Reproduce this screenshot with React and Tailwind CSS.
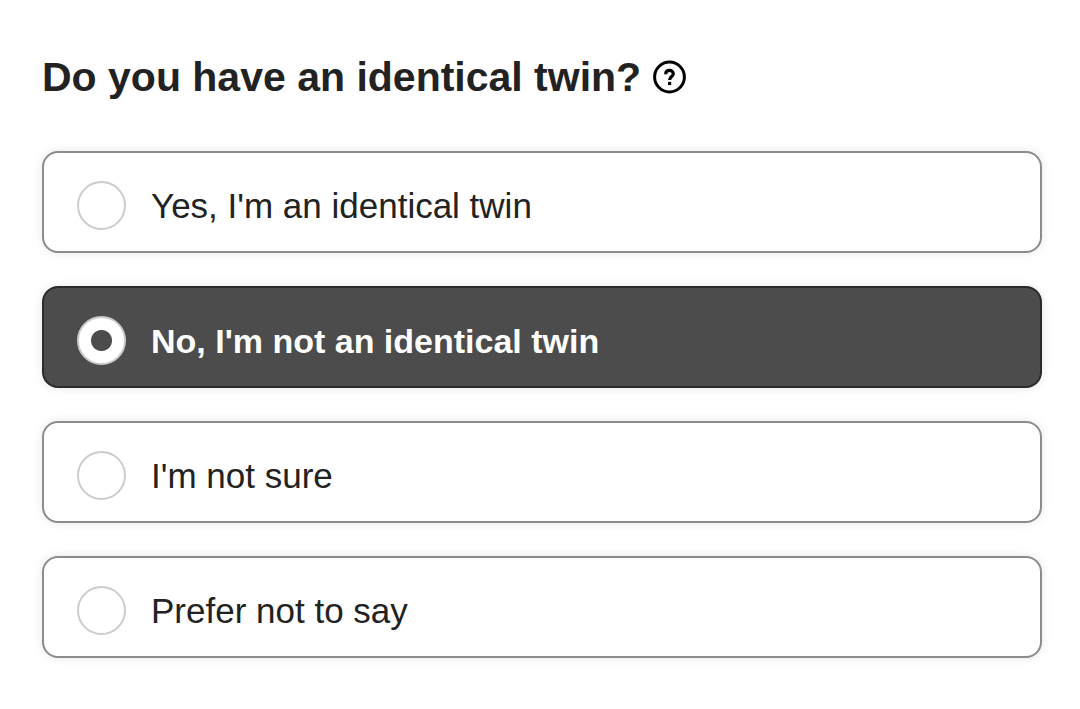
import { useState } from 'react';

const OPTIONS = [
  { value: 'yes', label: "Yes, I'm an identical twin" },
  { value: 'no', label: "No, I'm not an identical twin" },
  { value: 'unsure', label: "I'm not sure" },
  { value: 'skip', label: 'Prefer not to say' },
];

const HelpIcon = () => (
  <svg viewBox="0 0 34 34" className="w-[34px] h-[34px]" fill="none" stroke="currentColor" aria-hidden="true">
    <circle cx="16.5" cy="17" r="14.9" strokeWidth="3" />
    <path d="M12.7 14.2c0-2.4 1.6-3.9 3.8-3.9s3.8 1.5 3.8 3.5c0 2.7-3.7 2.9-3.7 6.1" strokeWidth="3.2" />
    <path d="M15 21.9h3.2v3.2h-3.2z" fill="currentColor" stroke="none" />
  </svg>
);

const App = () => {
  const [selected, setSelected] = useState('no');

  return (
    <main className="min-h-screen bg-white pl-[42px] pr-[38px] pt-[53px] pb-[50px] font-['Liberation_Sans',Arial,sans-serif] text-[#222222]">
      <form>
        <div className="flex items-center gap-3 mb-[50px]">
          <h1 id="question" className="text-[41px] leading-[48px] font-bold">
            Do you have an identical twin?
          </h1>
          <button type="button" aria-label="Help" className="text-black">
            <HelpIcon />
          </button>
        </div>

        <div role="radiogroup" aria-labelledby="question" className="flex flex-col gap-[33px]">
          {OPTIONS.map((option) => (
            <label
              key={option.value}
              htmlFor={option.value}
              className="flex items-center gap-[25px] px-[33px] pt-7 pb-[21px] rounded-2xl border-2 border-[#8c8c8c] bg-white shadow-[0_0_10px_rgba(0,0,0,0.1)] text-[35px] leading-[44px] cursor-pointer has-checked:bg-[#4c4c4c] has-checked:border-[#2b2b2b] has-checked:text-white has-checked:text-[34px] has-checked:leading-[44px] has-checked:font-bold"
            >
              <input
                id={option.value}
                type="radio"
                name="twin"
                value={option.value}
                checked={selected === option.value}
                onChange={() => setSelected(option.value)}
                className="appearance-none shrink-0 w-[49px] h-[49px] rounded-full border-2 border-[#cccccc] bg-white checked:bg-[radial-gradient(circle,#4c4c4c_10px,white_11px)]"
              />
              <span>{option.label}</span>
            </label>
          ))}
        </div>
      </form>
    </main>
  );
};

export default App;
